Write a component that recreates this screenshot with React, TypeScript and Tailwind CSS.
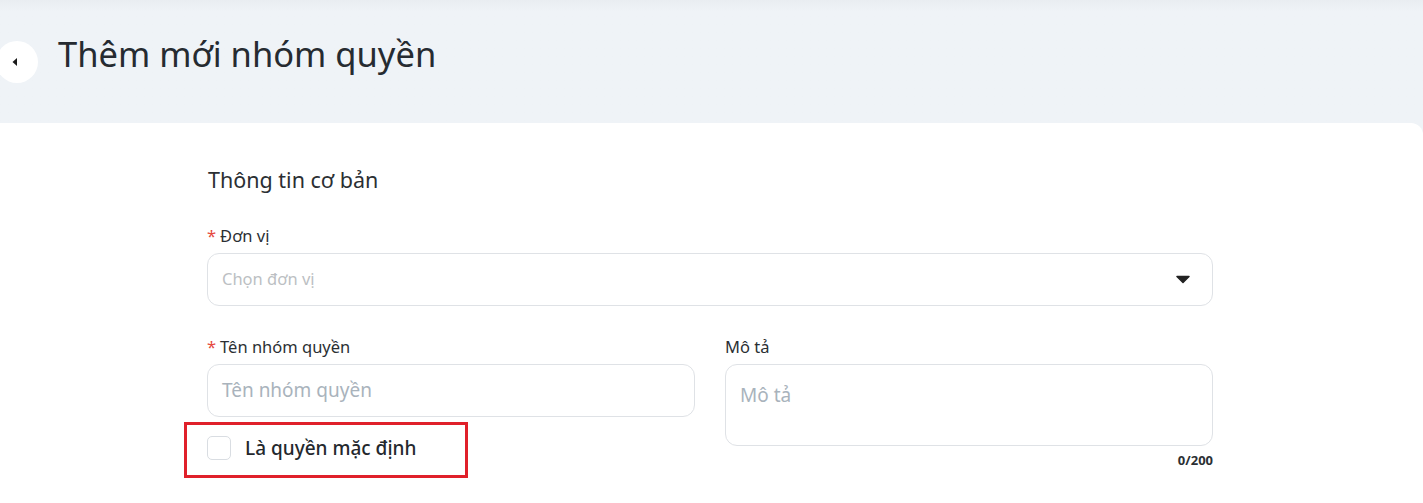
import { useState } from "react";

export default function App() {
  const [isDefault, setIsDefault] = useState(false);

  return (
    <div className="min-h-screen bg-[#eff3f7] font-['Noto_Sans',sans-serif] text-[#262b31]">
      {/* header */}
      <header className="h-[123px] bg-gradient-to-b from-[#e9edf1] to-[#eff3f7] to-[12px] flex items-center">
        <button className="ml-[-4px] w-[42px] h-[42px] rounded-full bg-white flex items-center justify-center pr-[4px]">
          <svg width="8" height="10" viewBox="0 0 8 10">
            <path d="M6 1 L1.5 5 L6 9 Z" fill="#1a1a1a" />
          </svg>
        </button>
        <h1 className="ml-[20px] mb-[16px] text-[34.5px] leading-[44px] font-normal">Thêm mới nhóm quyền</h1>
      </header>

      {/* card */}
      <main className="bg-white rounded-tr-[12px] min-h-[380px] pl-[207px]">
        <div className="w-[1006px] pt-[42px]">
          <h2 className="pl-[1px] text-[21.5px] text-[#2b2f33] leading-[30px]">Thông tin cơ bản</h2>

          <div className="mt-[30px]">
            <Label required>Đơn vị</Label>
            <div className="mt-[6px] h-[53px] rounded-[12px] border border-[#dfe2e6] flex items-center px-[14px] justify-between">
              <span className="text-[16.5px] text-[#bcbfc3]">Chọn đơn vị</span>
              <svg width="14" height="9" viewBox="0 0 14 9" className="mr-[8px]">
                <path d="M1 1.5 H13 L7 7.5 Z" fill="#222" stroke="#222" strokeLinejoin="round" strokeWidth="1.5" />
              </svg>
            </div>
          </div>

          <div className="mt-[30px] grid grid-cols-2 gap-[30px]">
            <div>
              <Label required>Tên nhóm quyền</Label>
              <div className="mt-[6px] h-[53px] rounded-[12px] border border-[#dfe2e6] flex items-center px-[14px]">
                <span className="text-[19px] text-[#a9b3bc]">Tên nhóm quyền</span>
              </div>
              <div className="relative mt-[18px] flex items-center">
                <div className="absolute left-[-23px] top-[-13px] w-[284px] h-[56px] border-[3px] border-[#e0202a] pointer-events-none" />
                <button
                  onClick={() => setIsDefault(!isDefault)}
                  className="w-[24px] h-[24px] rounded-[5px] border border-[#d9dde2] bg-white"
                />
                <span className="ml-[14px] text-[19px] leading-[26px] font-medium text-[#24282d]">Là quyền mặc định</span>
              </div>
            </div>
            <div>
              <Label>Mô tả</Label>
              <div className="mt-[6px] h-[82px] rounded-[12px] border border-[#dfe2e6] px-[14px] pt-[16px]">
                <span className="text-[19px] text-[#a9b3bc]">Mô tả</span>
              </div>
              <div className="mt-[5px] text-right text-[13px] font-bold text-[#2b2f33]">0/200</div>
            </div>
          </div>
        </div>
      </main>
    </div>
  );
}

function Label({ children, required }: { children: string; required?: boolean }) {
  return (
    <div className="text-[16.5px] leading-[22px] text-[#2b2f33]">
      {required && <span className="text-[#e5483d] mr-[4px]">*</span>}
      {children}
    </div>
  );
}
